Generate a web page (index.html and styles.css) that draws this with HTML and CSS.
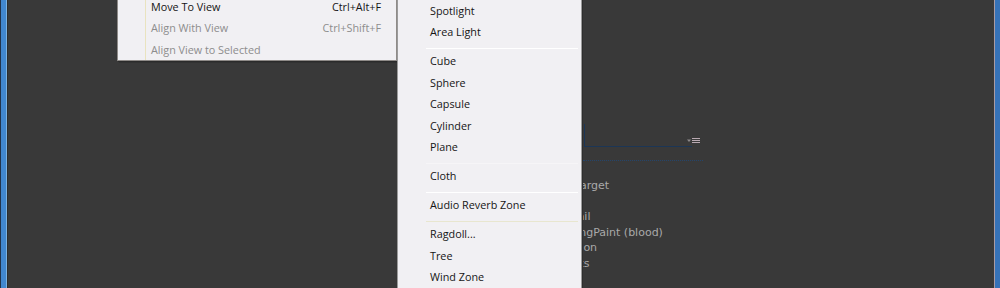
FILE: index.html
```html
<!DOCTYPE html>
<html>
<head>
<meta charset="utf-8">
<link rel="stylesheet" href="styles.css">
</head>
<body>
<div class="window">
  <div class="frame-left"></div>
  <div class="workspace">
    <div class="inspector">
      <div class="field-row">
        <div class="field"></div>
        <svg class="field-menu" width="13" height="7" viewBox="0 0 13 7">
          <path d="M0 1.5h4l-2 2.5z" fill="#8e8a8c"/>
          <rect x="5" y="0" width="8" height="1" fill="#b9a9b1"/>
          <rect x="5" y="2" width="8" height="1" fill="#b9a9b1"/>
          <rect x="5" y="4" width="8" height="1" fill="#b9a9b1"/>
        </svg>
      </div>
      <div class="dots"></div>
      <div class="lines">
        <div class="line t1">Target</div>
        <div class="line"></div>
        <div class="line t2">Trail</div>
        <div class="line t3">BleedingPaint (blood)</div>
        <div class="line t4">Animation</div>
        <div class="line t5">Tracks</div>
      </div>
    </div>

    <div class="menu menu-left">
      <div class="item"><span>Move To View</span><span class="key">Ctrl+Alt+F</span></div>
      <div class="item disabled"><span>Align With View</span><span class="key">Ctrl+Shift+F</span></div>
      <div class="item disabled"><span>Align View to Selected</span><span class="key"></span></div>
    </div>

    <div class="menu menu-right">
      <div class="item"><span>Spotlight</span></div>
      <div class="item"><span>Area Light</span></div>
      <div class="sep"></div>
      <div class="item"><span>Cube</span></div>
      <div class="item"><span>Sphere</span></div>
      <div class="item"><span>Capsule</span></div>
      <div class="item"><span>Cylinder</span></div>
      <div class="item"><span>Plane</span></div>
      <div class="sep faint"></div>
      <div class="item"><span>Cloth</span></div>
      <div class="sep"></div>
      <div class="item"><span>Audio Reverb Zone</span></div>
      <div class="sep warm"></div>
      <div class="item"><span>Ragdoll...</span></div>
      <div class="item"><span>Tree</span></div>
      <div class="item"><span>Wind Zone</span></div>
    </div>
  </div>
  <div class="frame-right"></div>
</div>
</body>
</html>
```

FILE: styles.css
```css
* { box-sizing: border-box; }

html, body {
  margin: 0;
  padding: 0;
}

body {
  width: 1000px;
  height: 288px;
  overflow: hidden;
  background: #393939;
}

.window {
  display: flex;
  height: 288px;
}

.frame-left {
  width: 8px;
  flex: none;
  background: linear-gradient(to right, #22344c 0 1px, #4187cf 1px 6px, #7cb3e3 6px 7px, #2c2c2c 7px 8px);
}

.frame-right {
  width: 6px;
  flex: none;
  background: linear-gradient(to right, #a89ba3 0 1px, #3672b8 1px 6px);
}

.workspace {
  flex: 1;
  position: relative;
  overflow: hidden;
  background: #393939;
}

/* background inspector content */
.inspector {
  margin-left: 576px;
  padding-top: 124px;
  width: 140px;
}

.field-row {
  display: flex;
  align-items: flex-start;
  height: 23px;
}

.field {
  width: 108px;
  height: 23px;
  border-left: 1px solid #1c3656;
  border-bottom: 1px solid #1c3656;
}

.field-menu {
  margin-top: 14px;
  margin-left: -5px;
  display: block;
}

.dots {
  margin-top: 13px;
  margin-left: -1px;
  width: 120px;
  height: 1px;
  border-top: 1px dotted #24456c;
}

.lines {
  margin-top: 17px;
  margin-left: -2px;
  font-family: "DejaVu Sans", sans-serif;
  font-size: 11px;
  line-height: 15.5px;
  color: #a9a9a9;
  white-space: nowrap;
}

.line { height: 15.5px; }
.t1 { text-indent: -7px; }
.t2 { text-indent: -14px; }
.t3 { text-indent: -37px; }
.t4 { text-indent: -41px; }
.t5 { text-indent: -27px; }

/* menus */
.menu {
  position: absolute;
  z-index: 2;
  background: #f1f0f3;
  font-family: "Open Sans", "Liberation Sans", sans-serif;
  font-size: 10.8px;
  color: #151515;
}

.item {
  display: flex;
  justify-content: space-between;
  align-items: center;
  height: 21.5px;
  white-space: nowrap;
}

.item.disabled { color: #8d8d8d; }

.menu-left {
  left: 109px;
  top: -5.75px;
  width: 280px;
  padding: 0 15px 0 33px;
  border: 1px solid #8f8b88;
  background-color: #f1f0f3;
  background-image: linear-gradient(to right, transparent 27px, #e9e3bf 27px 28px, transparent 28px);
  box-shadow: 1px 1px 0 #2b2b2b, 2px 2px 0 #323232;
}

.menu-right {
  left: 389px;
  top: -1.75px;
  width: 185px;
  padding: 0 3px 4px 32px;
  border: 1px solid #9b9b9b;
  box-shadow: 1px 0 0 #2e2e2e;
}

.sep {
  height: 1px;
  margin: 6px 0 0.5px -4px;
  background: #ffffff;
}

.sep.faint { background: #f6f5f7; }
.sep.warm { background: #e8e6cf; }
```
